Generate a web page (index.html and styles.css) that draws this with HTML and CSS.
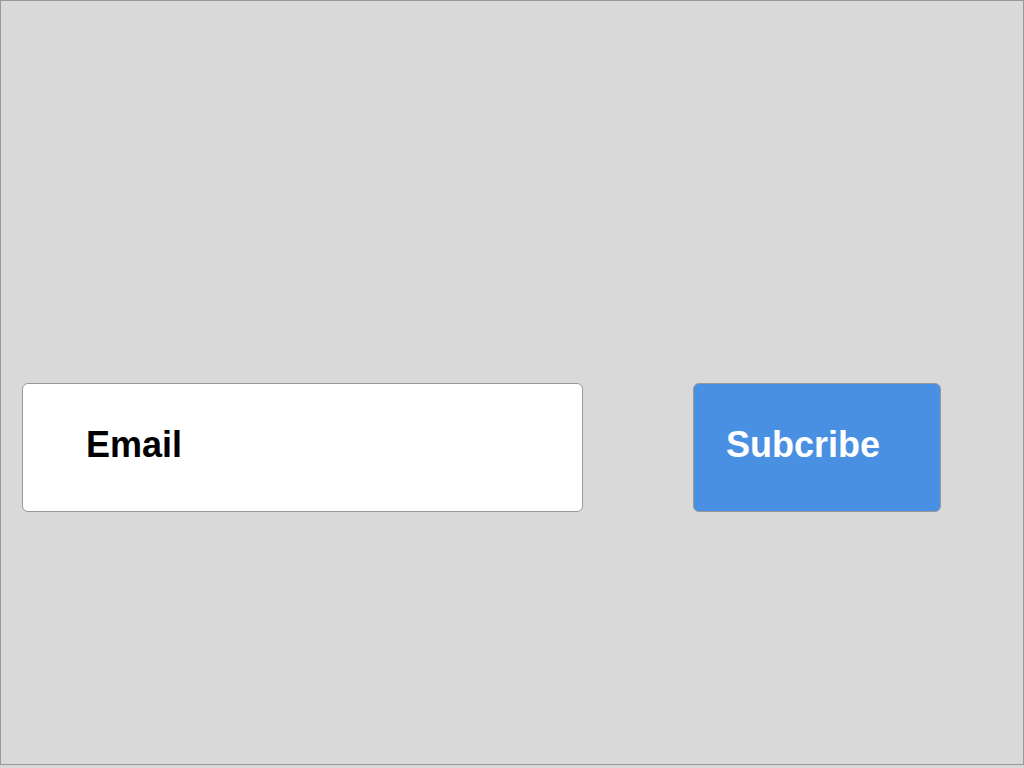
FILE: index.html
```html
<!DOCTYPE html>
<html lang="en">
<head>
<meta charset="utf-8">
<title>Subscribe</title>
<link rel="stylesheet" href="styles.css">
</head>
<body>
<div class="frame">
  <form class="subscribe">
    <div class="email-field"><span class="email-label">Email</span></div>
    <button type="button" class="subscribe-btn">Subcribe</button>
  </form>
</div>
</body>
</html>
```
FILE: styles.css
```css
html, body {
  margin: 0;
  padding: 0;
  background: #d9d9d9;
}
.frame {
  box-sizing: border-box;
  width: 1024px;
  height: 765px;
  border: 1px solid #999999;
  background: #d9d9d9;
  padding: 382px 0 0 21px;
  font-family: "Liberation Sans", Arial, sans-serif;
}
.subscribe {
  display: flex;
  align-items: flex-start;
  gap: 110px;
  margin: 0;
}
.email-field {
  box-sizing: border-box;
  width: 561px;
  height: 129px;
  background: #ffffff;
  border: 1px solid #999999;
  border-radius: 6px;
  padding: 40px 0 0 63px;
}
.email-label {
  display: block;
  font-size: 36px;
  font-weight: bold;
  line-height: 41px;
  color: #000000;
}
.subscribe-btn {
  box-sizing: border-box;
  width: 248px;
  height: 129px;
  margin: 0;
  background: #4a90e2;
  border: 1px solid #999999;
  border-radius: 6px;
  padding: 0 0 0 32px;
  text-align: left;
  font-family: "Liberation Sans", Arial, sans-serif;
  font-size: 36px;
  font-weight: bold;
  line-height: 41px;
  color: #ffffff;
  display: flex;
  align-items: flex-start;
  padding-top: 40px;
}
```
